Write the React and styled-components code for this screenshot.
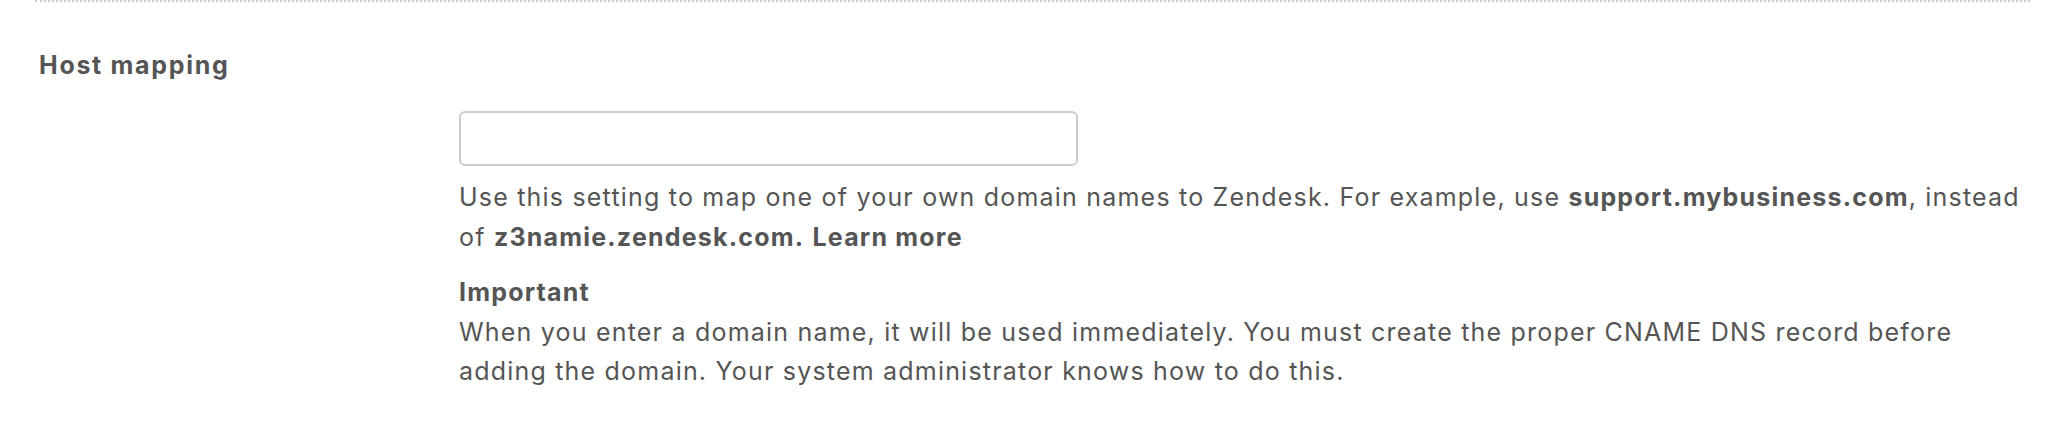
import React from "react";
import styled, { createGlobalStyle } from "styled-components";

const GlobalStyle = createGlobalStyle`
  body {
    margin: 0;
    background: #fff;
    font-family: Inter, "Noto Sans", sans-serif;
    color: #555;
  }
`;

const Section = styled.section`
  margin: 0 20px 0 35px;
  border-top: 2px dotted #ccc;
  padding: 0 4px;
`;

const Heading = styled.h3`
  margin: 49px 0 0;
  font-size: 25px;
  line-height: 28px;
  font-weight: 700;
  letter-spacing: 1.7px;
  color: #555;
`;

const Control = styled.div`
  margin: 32px 0 0 420px;
  display: flex;
  flex-direction: column;
`;

const TextInput = styled.input`
  box-sizing: border-box;
  width: 619px;
  height: 55px;
  border: 2px solid #ccc;
  border-radius: 6px;
  padding: 0 14px;
  font: inherit;
  font-size: 24px;
  outline: none;
`;

const Hint = styled.p`
  margin: ${(p) => (p.$first ? "12px" : "16px")} 0 0;
  font-size: 25px;
  line-height: 39.5px;
  letter-spacing: 1.2px;
  color: #555;

  strong {
    font-weight: 700;
  }
`;

const Link = styled.a`
  font-weight: 700;
  color: #555;
  text-decoration: none;
`;

export default function App() {
  return (
    <>
      <GlobalStyle />
      <Section>
        <Heading>Host mapping</Heading>
        <Control>
          <TextInput type="text" />
          <Hint $first>
            Use this setting to map one of your own domain names to Zendesk. For example, use{" "}
            <strong>support.mybusiness.com</strong>, instead of{" "}
            <strong>z3namie.zendesk.com.</strong> <Link href="#">Learn more</Link>
          </Hint>
          <Hint>
            <strong>Important</strong>
            <br />
            When you enter a domain name, it will be used immediately. You must create the proper
            CNAME DNS record before adding the domain. Your system administrator knows how to do
            this.
          </Hint>
        </Control>
      </Section>
    </>
  );
}
